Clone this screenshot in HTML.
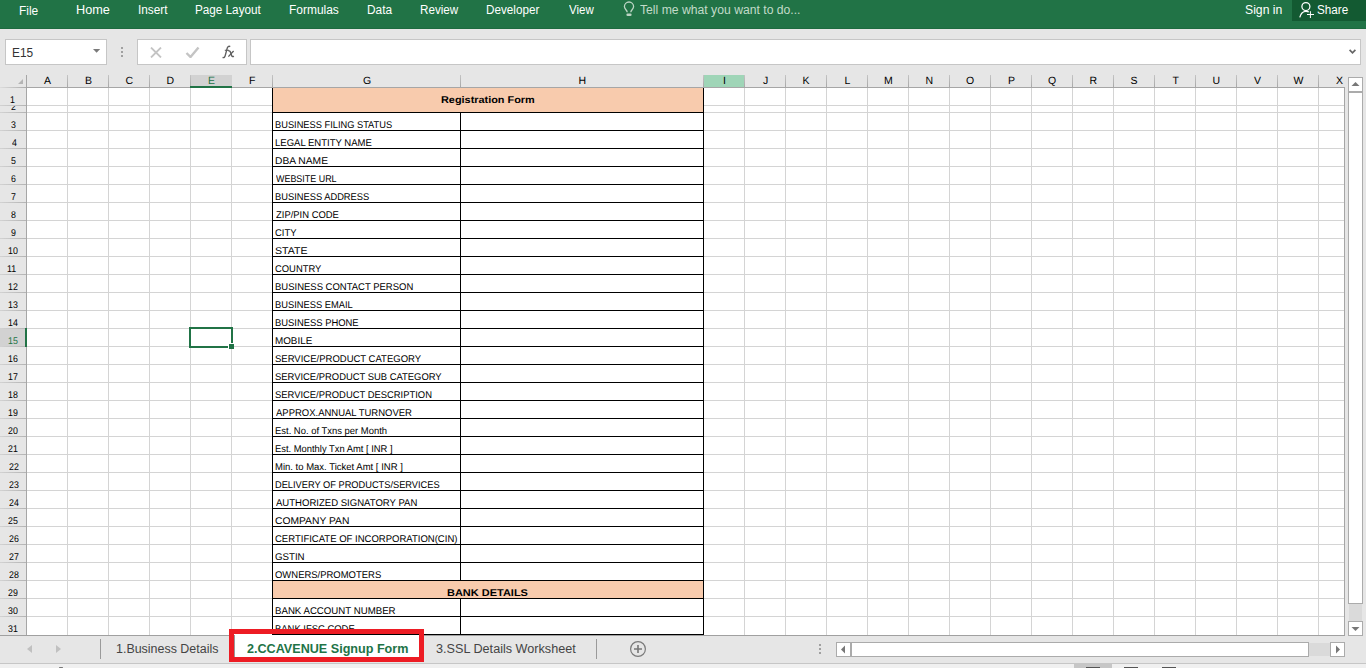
<!DOCTYPE html>
<html><head><meta charset="utf-8"><style>
*{margin:0;padding:0;box-sizing:border-box}
html,body{width:1366px;height:668px;overflow:hidden;background:#e6e6e6;font-family:"Liberation Sans",sans-serif}
.a{position:absolute}
.t{position:absolute;white-space:nowrap;line-height:1}
</style></head><body>

<div class="a" style="left:0;top:0;width:1366px;height:29px;background:#217346"></div>
<div class="a" style="left:0;top:28px;width:1366px;height:1px;background:#1d6a3f"></div>
<div class="a" style="left:1292px;top:0;width:74px;height:21px;background:#135a32"></div>
<div class="t" style="left:19.21px;top:5px;font-size:12px;color:#ffffff;transform:scaleX(0.9944);transform-origin:0 0;">File</div>
<div class="t" style="left:75.82px;top:3px;font-size:13px;color:#ffffff;transform:scaleX(0.9758);transform-origin:0 0;">Home</div>
<div class="t" style="left:137.52px;top:4px;font-size:12px;color:#ffffff;transform:scaleX(0.9828);transform-origin:0 0;">Insert</div>
<div class="t" style="left:195.22px;top:4px;font-size:12px;color:#ffffff;transform:scaleX(0.9758);transform-origin:0 0;">Page Layout</div>
<div class="t" style="left:289.20px;top:4px;font-size:12px;color:#ffffff;transform:scaleX(0.9959);transform-origin:0 0;">Formulas</div>
<div class="t" style="left:367.21px;top:4px;font-size:12px;color:#ffffff;transform:scaleX(0.9875);transform-origin:0 0;">Data</div>
<div class="t" style="left:419.93px;top:4px;font-size:12px;color:#ffffff;transform:scaleX(0.9711);transform-origin:0 0;">Review</div>
<div class="t" style="left:486.33px;top:4px;font-size:12px;color:#ffffff;transform:scaleX(0.9741);transform-origin:0 0;">Developer</div>
<div class="t" style="left:568.80px;top:4px;font-size:12px;color:#ffffff;transform:scaleX(0.9577);transform-origin:0 0;">View</div>
<div class="t" style="left:1244.88px;top:4px;font-size:12px;color:#ffffff;transform:scaleX(1.0171);transform-origin:0 0;">Sign in</div>
<div class="t" style="left:1316.83px;top:4px;font-size:12px;color:#ffffff;transform:scaleX(0.9733);transform-origin:0 0;">Share</div>
<div class="t" style="left:640.40px;top:4px;font-size:12px;color:#c2dbc9;transform:scaleX(1.0153);transform-origin:0 0;">Tell me what you want to do...</div>
<svg class="a" style="left:622px;top:0px" width="14" height="18" viewBox="0 0 14 18"><path d="M5.2 12.2 C5.2 10.2 2.4 9.2 2.4 6.6 A4.6 4.6 0 0 1 11.6 6.6 C11.6 9.2 8.8 10.2 8.8 12.2" fill="none" stroke="#bcd5c4" stroke-width="1.3"/><line x1="5.6" y1="14.8" x2="8.4" y2="14.8" stroke="#bcd5c4" stroke-width="2.4" stroke-linecap="round"/></svg>
<svg class="a" style="left:1298px;top:0px" width="18" height="20" viewBox="0 0 18 20"><circle cx="7.9" cy="6.6" r="4" fill="none" stroke="#fff" stroke-width="1.25"/><path d="M1.8 17.4 C2.6 13.6 5 11.3 8 11.3 C9 11.3 10 11.5 10.8 11.9" fill="none" stroke="#fff" stroke-width="1.25"/><line x1="9" y1="14.5" x2="16" y2="14.5" stroke="#fff" stroke-width="1"/><line x1="12.4" y1="11.2" x2="12.4" y2="18" stroke="#fff" stroke-width="1"/></svg>
<div class="a" style="left:5px;top:39px;width:102px;height:26px;background:#fff;border:1px solid #c6c6c6"></div>
<div class="t" style="left:11.71px;top:47px;font-size:12px;color:#333333;transform:scaleX(0.9900);transform-origin:0 0;">E15</div>
<svg class="a" style="left:92px;top:48px" width="10" height="6" viewBox="0 0 10 6"><path d="M1 1 L8.2 1 L4.6 4.7 Z" fill="#7a7a7a"/></svg>
<div class="a" style="left:121px;top:47px;width:2px;height:2px;background:#a0a0a0"></div>
<div class="a" style="left:121px;top:51px;width:2px;height:2px;background:#a0a0a0"></div>
<div class="a" style="left:121px;top:55px;width:2px;height:2px;background:#a0a0a0"></div>
<div class="a" style="left:137px;top:39px;width:110px;height:26px;background:#fff;border:1px solid #c6c6c6"></div>
<svg class="a" style="left:150px;top:47px" width="12" height="11" viewBox="0 0 12 11"><path d="M1 0.5 L11 10.5 M11 0.5 L1 10.5" stroke="#c4c4c4" stroke-width="1.8"/></svg>
<svg class="a" style="left:185px;top:46px" width="15" height="12" viewBox="0 0 15 12"><path d="M1.5 7 L5.5 11 L13.5 1.5" fill="none" stroke="#c4c4c4" stroke-width="2.4"/></svg>
<svg class="a" style="left:220px;top:44px" width="16" height="16" viewBox="0 0 16 16"><path d="M10.2 2.6 C9.3 1.9 7.9 2.1 7.3 3.9 L5.2 11.6 C4.8 13.2 3.9 14 2.6 13.4" fill="none" stroke="#5e5e5e" stroke-width="1.4"/><path d="M4.8 6.3 L9 6.3" stroke="#5e5e5e" stroke-width="1.1"/><path d="M8.4 7.2 C9.4 6.6 10.1 7 10.5 8.2 L11.6 11.4 C12 12.6 12.9 12.8 13.8 12.1" fill="none" stroke="#5e5e5e" stroke-width="1.4"/><path d="M13.6 7 L8.4 12.6" stroke="#5e5e5e" stroke-width="1.3"/></svg>
<div class="a" style="left:250px;top:39px;width:1111px;height:26px;background:#fff;border:1px solid #c6c6c6"></div>
<svg class="a" style="left:1348px;top:48px" width="10" height="7" viewBox="0 0 10 7"><path d="M1.6 1.9 L4.5 4.8 L7.4 1.9" fill="none" stroke="#666" stroke-width="1.7"/></svg>
<svg class="a" style="left:17px;top:78px" width="7" height="7"><path d="M1 6 L6 6 L6 1 Z" fill="#b4b4b4"/></svg>
<div class="a" style="left:26px;top:75px;width:1px;height:12px;background:linear-gradient(#c4c4c4,#a8a8a8)"></div>
<div class="a" style="left:67px;top:75px;width:1px;height:12px;background:linear-gradient(#c4c4c4,#a8a8a8)"></div>
<div class="a" style="left:108px;top:75px;width:1px;height:12px;background:linear-gradient(#c4c4c4,#a8a8a8)"></div>
<div class="a" style="left:149px;top:75px;width:1px;height:12px;background:linear-gradient(#c4c4c4,#a8a8a8)"></div>
<div class="a" style="left:190px;top:75px;width:1px;height:12px;background:linear-gradient(#c4c4c4,#a8a8a8)"></div>
<div class="a" style="left:231px;top:75px;width:1px;height:12px;background:linear-gradient(#c4c4c4,#a8a8a8)"></div>
<div class="a" style="left:272px;top:75px;width:1px;height:12px;background:linear-gradient(#c4c4c4,#a8a8a8)"></div>
<div class="a" style="left:460px;top:75px;width:1px;height:12px;background:linear-gradient(#c4c4c4,#a8a8a8)"></div>
<div class="a" style="left:703px;top:75px;width:1px;height:12px;background:linear-gradient(#c4c4c4,#a8a8a8)"></div>
<div class="a" style="left:744px;top:75px;width:1px;height:12px;background:linear-gradient(#c4c4c4,#a8a8a8)"></div>
<div class="a" style="left:785px;top:75px;width:1px;height:12px;background:linear-gradient(#c4c4c4,#a8a8a8)"></div>
<div class="a" style="left:826px;top:75px;width:1px;height:12px;background:linear-gradient(#c4c4c4,#a8a8a8)"></div>
<div class="a" style="left:867px;top:75px;width:1px;height:12px;background:linear-gradient(#c4c4c4,#a8a8a8)"></div>
<div class="a" style="left:908px;top:75px;width:1px;height:12px;background:linear-gradient(#c4c4c4,#a8a8a8)"></div>
<div class="a" style="left:949px;top:75px;width:1px;height:12px;background:linear-gradient(#c4c4c4,#a8a8a8)"></div>
<div class="a" style="left:990px;top:75px;width:1px;height:12px;background:linear-gradient(#c4c4c4,#a8a8a8)"></div>
<div class="a" style="left:1031px;top:75px;width:1px;height:12px;background:linear-gradient(#c4c4c4,#a8a8a8)"></div>
<div class="a" style="left:1072px;top:75px;width:1px;height:12px;background:linear-gradient(#c4c4c4,#a8a8a8)"></div>
<div class="a" style="left:1113px;top:75px;width:1px;height:12px;background:linear-gradient(#c4c4c4,#a8a8a8)"></div>
<div class="a" style="left:1154px;top:75px;width:1px;height:12px;background:linear-gradient(#c4c4c4,#a8a8a8)"></div>
<div class="a" style="left:1195px;top:75px;width:1px;height:12px;background:linear-gradient(#c4c4c4,#a8a8a8)"></div>
<div class="a" style="left:1236px;top:75px;width:1px;height:12px;background:linear-gradient(#c4c4c4,#a8a8a8)"></div>
<div class="a" style="left:1277px;top:75px;width:1px;height:12px;background:linear-gradient(#c4c4c4,#a8a8a8)"></div>
<div class="a" style="left:1318px;top:75px;width:1px;height:12px;background:linear-gradient(#c4c4c4,#a8a8a8)"></div>
<div class="a" style="left:0;top:87px;width:26px;height:1px;background:linear-gradient(to right,#dcdcdc,#ababab)"></div>
<div class="a" style="left:26px;top:87px;width:1318px;height:1px;background:#a6a6a6"></div>
<div class="a" style="left:26px;top:75px;width:1px;height:561px;background:#a6a6a6"></div>
<div class="a" style="left:191px;top:75px;width:41px;height:11px;background:#d2d2d2"></div>
<div class="a" style="left:190px;top:86px;width:42px;height:2px;background:#217346"></div>
<div class="a" style="left:704px;top:75px;width:40px;height:12px;background:#9fd5b7"></div>
<div class="t" style="left:44.00px;top:76px;font-size:10.5px;color:#000;text-rendering:geometricPrecision;">A</div>
<div class="t" style="left:85.00px;top:76px;font-size:10.5px;color:#000;text-rendering:geometricPrecision;">B</div>
<div class="t" style="left:125.50px;top:76px;font-size:10.5px;color:#000;text-rendering:geometricPrecision;">C</div>
<div class="t" style="left:166.50px;top:76px;font-size:10.5px;color:#000;text-rendering:geometricPrecision;">D</div>
<div class="t" style="left:208.00px;top:76px;font-size:10.5px;color:#217346;text-rendering:geometricPrecision;">E</div>
<div class="t" style="left:249.00px;top:76px;font-size:10.5px;color:#000;text-rendering:geometricPrecision;">F</div>
<div class="t" style="left:363.00px;top:76px;font-size:10.5px;color:#000;text-rendering:geometricPrecision;">G</div>
<div class="t" style="left:578.50px;top:76px;font-size:10.5px;color:#000;text-rendering:geometricPrecision;">H</div>
<div class="t" style="left:723.00px;top:76px;font-size:10.5px;color:#000;text-rendering:geometricPrecision;">I</div>
<div class="t" style="left:763.00px;top:76px;font-size:10.5px;color:#000;text-rendering:geometricPrecision;">J</div>
<div class="t" style="left:802.50px;top:76px;font-size:10.5px;color:#000;text-rendering:geometricPrecision;">K</div>
<div class="t" style="left:844.50px;top:76px;font-size:10.5px;color:#000;text-rendering:geometricPrecision;">L</div>
<div class="t" style="left:884.00px;top:76px;font-size:10.5px;color:#000;text-rendering:geometricPrecision;">M</div>
<div class="t" style="left:925.50px;top:76px;font-size:10.5px;color:#000;text-rendering:geometricPrecision;">N</div>
<div class="t" style="left:966.00px;top:76px;font-size:10.5px;color:#000;text-rendering:geometricPrecision;">O</div>
<div class="t" style="left:1008.00px;top:76px;font-size:10.5px;color:#000;text-rendering:geometricPrecision;">P</div>
<div class="t" style="left:1048.00px;top:76px;font-size:10.5px;color:#000;text-rendering:geometricPrecision;">Q</div>
<div class="t" style="left:1089.50px;top:76px;font-size:10.5px;color:#000;text-rendering:geometricPrecision;">R</div>
<div class="t" style="left:1130.50px;top:76px;font-size:10.5px;color:#000;text-rendering:geometricPrecision;">S</div>
<div class="t" style="left:1172.50px;top:76px;font-size:10.5px;color:#000;text-rendering:geometricPrecision;">T</div>
<div class="t" style="left:1212.50px;top:76px;font-size:10.5px;color:#000;text-rendering:geometricPrecision;">U</div>
<div class="t" style="left:1254.00px;top:76px;font-size:10.5px;color:#000;text-rendering:geometricPrecision;">V</div>
<div class="t" style="left:1293.50px;top:76px;font-size:10.5px;color:#000;text-rendering:geometricPrecision;">W</div>
<div class="t" style="left:1336.00px;top:76px;font-size:10.5px;color:#000;text-rendering:geometricPrecision;">X</div>
<div class="a" style="left:0;top:329px;width:25px;height:17px;background:#d2d2d2"></div>
<div class="a" style="left:0;top:105px;width:26px;height:1px;background:linear-gradient(to right,#d2d2d2,#b4b4b4)"></div>
<div class="a" style="left:0;top:88px;width:26px;height:18px;overflow:hidden">
<div class="t" style="left:10.20px;top:8px;font-size:9.8px;color:#000;transform:scaleX(0.9000);transform-origin:0 0;text-rendering:geometricPrecision;">1</div>
</div>
<div class="a" style="left:0;top:112px;width:26px;height:1px;background:linear-gradient(to right,#d2d2d2,#b4b4b4)"></div>
<div class="a" style="left:0;top:106px;width:26px;height:7px;overflow:hidden">
<div class="t" style="left:11.10px;top:-3px;font-size:9.8px;color:#000;transform:scaleX(0.9000);transform-origin:0 0;text-rendering:geometricPrecision;">2</div>
</div>
<div class="a" style="left:0;top:130px;width:26px;height:1px;background:linear-gradient(to right,#d2d2d2,#b4b4b4)"></div>
<div class="a" style="left:0;top:113px;width:26px;height:18px;overflow:hidden">
<div class="t" style="left:11.10px;top:8px;font-size:9.8px;color:#000;transform:scaleX(0.9000);transform-origin:0 0;text-rendering:geometricPrecision;">3</div>
</div>
<div class="a" style="left:0;top:148px;width:26px;height:1px;background:linear-gradient(to right,#d2d2d2,#b4b4b4)"></div>
<div class="a" style="left:0;top:131px;width:26px;height:18px;overflow:hidden">
<div class="t" style="left:11.55px;top:8px;font-size:9.8px;color:#000;transform:scaleX(0.9000);transform-origin:0 0;text-rendering:geometricPrecision;">4</div>
</div>
<div class="a" style="left:0;top:166px;width:26px;height:1px;background:linear-gradient(to right,#d2d2d2,#b4b4b4)"></div>
<div class="a" style="left:0;top:149px;width:26px;height:18px;overflow:hidden">
<div class="t" style="left:11.10px;top:8px;font-size:9.8px;color:#000;transform:scaleX(0.9000);transform-origin:0 0;text-rendering:geometricPrecision;">5</div>
</div>
<div class="a" style="left:0;top:184px;width:26px;height:1px;background:linear-gradient(to right,#d2d2d2,#b4b4b4)"></div>
<div class="a" style="left:0;top:167px;width:26px;height:18px;overflow:hidden">
<div class="t" style="left:11.10px;top:8px;font-size:9.8px;color:#000;transform:scaleX(0.9000);transform-origin:0 0;text-rendering:geometricPrecision;">6</div>
</div>
<div class="a" style="left:0;top:202px;width:26px;height:1px;background:linear-gradient(to right,#d2d2d2,#b4b4b4)"></div>
<div class="a" style="left:0;top:185px;width:26px;height:18px;overflow:hidden">
<div class="t" style="left:11.10px;top:8px;font-size:9.8px;color:#000;transform:scaleX(0.9000);transform-origin:0 0;text-rendering:geometricPrecision;">7</div>
</div>
<div class="a" style="left:0;top:220px;width:26px;height:1px;background:linear-gradient(to right,#d2d2d2,#b4b4b4)"></div>
<div class="a" style="left:0;top:203px;width:26px;height:18px;overflow:hidden">
<div class="t" style="left:11.10px;top:8px;font-size:9.8px;color:#000;transform:scaleX(0.9000);transform-origin:0 0;text-rendering:geometricPrecision;">8</div>
</div>
<div class="a" style="left:0;top:238px;width:26px;height:1px;background:linear-gradient(to right,#d2d2d2,#b4b4b4)"></div>
<div class="a" style="left:0;top:221px;width:26px;height:18px;overflow:hidden">
<div class="t" style="left:11.10px;top:8px;font-size:9.8px;color:#000;transform:scaleX(0.9000);transform-origin:0 0;text-rendering:geometricPrecision;">9</div>
</div>
<div class="a" style="left:0;top:256px;width:26px;height:1px;background:linear-gradient(to right,#d2d2d2,#b4b4b4)"></div>
<div class="a" style="left:0;top:239px;width:26px;height:18px;overflow:hidden">
<div class="t" style="left:7.50px;top:8px;font-size:9.8px;color:#000;transform:scaleX(0.9000);transform-origin:0 0;text-rendering:geometricPrecision;">10</div>
</div>
<div class="a" style="left:0;top:274px;width:26px;height:1px;background:linear-gradient(to right,#d2d2d2,#b4b4b4)"></div>
<div class="a" style="left:0;top:257px;width:26px;height:18px;overflow:hidden">
<div class="t" style="left:7.05px;top:8px;font-size:9.8px;color:#000;transform:scaleX(0.9000);transform-origin:0 0;text-rendering:geometricPrecision;">11</div>
</div>
<div class="a" style="left:0;top:292px;width:26px;height:1px;background:linear-gradient(to right,#d2d2d2,#b4b4b4)"></div>
<div class="a" style="left:0;top:275px;width:26px;height:18px;overflow:hidden">
<div class="t" style="left:7.95px;top:8px;font-size:9.8px;color:#000;transform:scaleX(0.9000);transform-origin:0 0;text-rendering:geometricPrecision;">12</div>
</div>
<div class="a" style="left:0;top:310px;width:26px;height:1px;background:linear-gradient(to right,#d2d2d2,#b4b4b4)"></div>
<div class="a" style="left:0;top:293px;width:26px;height:18px;overflow:hidden">
<div class="t" style="left:7.95px;top:8px;font-size:9.8px;color:#000;transform:scaleX(0.9000);transform-origin:0 0;text-rendering:geometricPrecision;">13</div>
</div>
<div class="a" style="left:0;top:328px;width:26px;height:1px;background:linear-gradient(to right,#d2d2d2,#b4b4b4)"></div>
<div class="a" style="left:0;top:311px;width:26px;height:18px;overflow:hidden">
<div class="t" style="left:7.95px;top:8px;font-size:9.8px;color:#000;transform:scaleX(0.9000);transform-origin:0 0;text-rendering:geometricPrecision;">14</div>
</div>
<div class="a" style="left:0;top:346px;width:26px;height:1px;background:linear-gradient(to right,#d2d2d2,#b4b4b4)"></div>
<div class="a" style="left:0;top:329px;width:26px;height:18px;overflow:hidden">
<div class="t" style="left:7.50px;top:8px;font-size:9.8px;color:#217346;transform:scaleX(0.9000);transform-origin:0 0;text-rendering:geometricPrecision;">15</div>
</div>
<div class="a" style="left:0;top:364px;width:26px;height:1px;background:linear-gradient(to right,#d2d2d2,#b4b4b4)"></div>
<div class="a" style="left:0;top:347px;width:26px;height:18px;overflow:hidden">
<div class="t" style="left:7.95px;top:8px;font-size:9.8px;color:#000;transform:scaleX(0.9000);transform-origin:0 0;text-rendering:geometricPrecision;">16</div>
</div>
<div class="a" style="left:0;top:382px;width:26px;height:1px;background:linear-gradient(to right,#d2d2d2,#b4b4b4)"></div>
<div class="a" style="left:0;top:365px;width:26px;height:18px;overflow:hidden">
<div class="t" style="left:7.95px;top:8px;font-size:9.8px;color:#000;transform:scaleX(0.9000);transform-origin:0 0;text-rendering:geometricPrecision;">17</div>
</div>
<div class="a" style="left:0;top:400px;width:26px;height:1px;background:linear-gradient(to right,#d2d2d2,#b4b4b4)"></div>
<div class="a" style="left:0;top:383px;width:26px;height:18px;overflow:hidden">
<div class="t" style="left:7.95px;top:8px;font-size:9.8px;color:#000;transform:scaleX(0.9000);transform-origin:0 0;text-rendering:geometricPrecision;">18</div>
</div>
<div class="a" style="left:0;top:418px;width:26px;height:1px;background:linear-gradient(to right,#d2d2d2,#b4b4b4)"></div>
<div class="a" style="left:0;top:401px;width:26px;height:18px;overflow:hidden">
<div class="t" style="left:7.50px;top:8px;font-size:9.8px;color:#000;transform:scaleX(0.9000);transform-origin:0 0;text-rendering:geometricPrecision;">19</div>
</div>
<div class="a" style="left:0;top:436px;width:26px;height:1px;background:linear-gradient(to right,#d2d2d2,#b4b4b4)"></div>
<div class="a" style="left:0;top:419px;width:26px;height:18px;overflow:hidden">
<div class="t" style="left:8.40px;top:8px;font-size:9.8px;color:#000;transform:scaleX(0.9000);transform-origin:0 0;text-rendering:geometricPrecision;">20</div>
</div>
<div class="a" style="left:0;top:454px;width:26px;height:1px;background:linear-gradient(to right,#d2d2d2,#b4b4b4)"></div>
<div class="a" style="left:0;top:437px;width:26px;height:18px;overflow:hidden">
<div class="t" style="left:7.95px;top:8px;font-size:9.8px;color:#000;transform:scaleX(0.9000);transform-origin:0 0;text-rendering:geometricPrecision;">21</div>
</div>
<div class="a" style="left:0;top:472px;width:26px;height:1px;background:linear-gradient(to right,#d2d2d2,#b4b4b4)"></div>
<div class="a" style="left:0;top:455px;width:26px;height:18px;overflow:hidden">
<div class="t" style="left:8.85px;top:8px;font-size:9.8px;color:#000;transform:scaleX(0.9000);transform-origin:0 0;text-rendering:geometricPrecision;">22</div>
</div>
<div class="a" style="left:0;top:490px;width:26px;height:1px;background:linear-gradient(to right,#d2d2d2,#b4b4b4)"></div>
<div class="a" style="left:0;top:473px;width:26px;height:18px;overflow:hidden">
<div class="t" style="left:8.85px;top:8px;font-size:9.8px;color:#000;transform:scaleX(0.9000);transform-origin:0 0;text-rendering:geometricPrecision;">23</div>
</div>
<div class="a" style="left:0;top:508px;width:26px;height:1px;background:linear-gradient(to right,#d2d2d2,#b4b4b4)"></div>
<div class="a" style="left:0;top:491px;width:26px;height:18px;overflow:hidden">
<div class="t" style="left:8.85px;top:8px;font-size:9.8px;color:#000;transform:scaleX(0.9000);transform-origin:0 0;text-rendering:geometricPrecision;">24</div>
</div>
<div class="a" style="left:0;top:526px;width:26px;height:1px;background:linear-gradient(to right,#d2d2d2,#b4b4b4)"></div>
<div class="a" style="left:0;top:509px;width:26px;height:18px;overflow:hidden">
<div class="t" style="left:8.40px;top:8px;font-size:9.8px;color:#000;transform:scaleX(0.9000);transform-origin:0 0;text-rendering:geometricPrecision;">25</div>
</div>
<div class="a" style="left:0;top:544px;width:26px;height:1px;background:linear-gradient(to right,#d2d2d2,#b4b4b4)"></div>
<div class="a" style="left:0;top:527px;width:26px;height:18px;overflow:hidden">
<div class="t" style="left:8.85px;top:8px;font-size:9.8px;color:#000;transform:scaleX(0.9000);transform-origin:0 0;text-rendering:geometricPrecision;">26</div>
</div>
<div class="a" style="left:0;top:562px;width:26px;height:1px;background:linear-gradient(to right,#d2d2d2,#b4b4b4)"></div>
<div class="a" style="left:0;top:545px;width:26px;height:18px;overflow:hidden">
<div class="t" style="left:8.85px;top:8px;font-size:9.8px;color:#000;transform:scaleX(0.9000);transform-origin:0 0;text-rendering:geometricPrecision;">27</div>
</div>
<div class="a" style="left:0;top:580px;width:26px;height:1px;background:linear-gradient(to right,#d2d2d2,#b4b4b4)"></div>
<div class="a" style="left:0;top:563px;width:26px;height:18px;overflow:hidden">
<div class="t" style="left:8.85px;top:8px;font-size:9.8px;color:#000;transform:scaleX(0.9000);transform-origin:0 0;text-rendering:geometricPrecision;">28</div>
</div>
<div class="a" style="left:0;top:598px;width:26px;height:1px;background:linear-gradient(to right,#d2d2d2,#b4b4b4)"></div>
<div class="a" style="left:0;top:581px;width:26px;height:18px;overflow:hidden">
<div class="t" style="left:8.40px;top:8px;font-size:9.8px;color:#000;transform:scaleX(0.9000);transform-origin:0 0;text-rendering:geometricPrecision;">29</div>
</div>
<div class="a" style="left:0;top:616px;width:26px;height:1px;background:linear-gradient(to right,#d2d2d2,#b4b4b4)"></div>
<div class="a" style="left:0;top:599px;width:26px;height:18px;overflow:hidden">
<div class="t" style="left:8.40px;top:8px;font-size:9.8px;color:#000;transform:scaleX(0.9000);transform-origin:0 0;text-rendering:geometricPrecision;">30</div>
</div>
<div class="a" style="left:0;top:617px;width:26px;height:18px;overflow:hidden">
<div class="t" style="left:7.95px;top:8px;font-size:9.8px;color:#000;transform:scaleX(0.9000);transform-origin:0 0;text-rendering:geometricPrecision;">31</div>
</div>
<div class="a" style="left:25px;top:328px;width:2px;height:19px;background:#217346"></div>
<div class="a" style="left:27px;top:88px;width:1317px;height:547px;background:#fff;overflow:hidden">
<div class="a" style="left:40px;top:0;width:1px;height:547px;background:#d4d4d4"></div>
<div class="a" style="left:81px;top:0;width:1px;height:547px;background:#d4d4d4"></div>
<div class="a" style="left:122px;top:0;width:1px;height:547px;background:#d4d4d4"></div>
<div class="a" style="left:163px;top:0;width:1px;height:547px;background:#d4d4d4"></div>
<div class="a" style="left:204px;top:0;width:1px;height:547px;background:#d4d4d4"></div>
<div class="a" style="left:245px;top:0;width:1px;height:547px;background:#d4d4d4"></div>
<div class="a" style="left:433px;top:0;width:1px;height:547px;background:#d4d4d4"></div>
<div class="a" style="left:676px;top:0;width:1px;height:547px;background:#d4d4d4"></div>
<div class="a" style="left:717px;top:0;width:1px;height:547px;background:#d4d4d4"></div>
<div class="a" style="left:758px;top:0;width:1px;height:547px;background:#d4d4d4"></div>
<div class="a" style="left:799px;top:0;width:1px;height:547px;background:#d4d4d4"></div>
<div class="a" style="left:840px;top:0;width:1px;height:547px;background:#d4d4d4"></div>
<div class="a" style="left:881px;top:0;width:1px;height:547px;background:#d4d4d4"></div>
<div class="a" style="left:922px;top:0;width:1px;height:547px;background:#d4d4d4"></div>
<div class="a" style="left:963px;top:0;width:1px;height:547px;background:#d4d4d4"></div>
<div class="a" style="left:1004px;top:0;width:1px;height:547px;background:#d4d4d4"></div>
<div class="a" style="left:1045px;top:0;width:1px;height:547px;background:#d4d4d4"></div>
<div class="a" style="left:1086px;top:0;width:1px;height:547px;background:#d4d4d4"></div>
<div class="a" style="left:1127px;top:0;width:1px;height:547px;background:#d4d4d4"></div>
<div class="a" style="left:1168px;top:0;width:1px;height:547px;background:#d4d4d4"></div>
<div class="a" style="left:1209px;top:0;width:1px;height:547px;background:#d4d4d4"></div>
<div class="a" style="left:1250px;top:0;width:1px;height:547px;background:#d4d4d4"></div>
<div class="a" style="left:1291px;top:0;width:1px;height:547px;background:#d4d4d4"></div>
<div class="a" style="left:0;top:17px;width:1317px;height:1px;background:#d4d4d4"></div>
<div class="a" style="left:0;top:24px;width:1317px;height:1px;background:#d4d4d4"></div>
<div class="a" style="left:0;top:42px;width:1317px;height:1px;background:#d4d4d4"></div>
<div class="a" style="left:0;top:60px;width:1317px;height:1px;background:#d4d4d4"></div>
<div class="a" style="left:0;top:78px;width:1317px;height:1px;background:#d4d4d4"></div>
<div class="a" style="left:0;top:96px;width:1317px;height:1px;background:#d4d4d4"></div>
<div class="a" style="left:0;top:114px;width:1317px;height:1px;background:#d4d4d4"></div>
<div class="a" style="left:0;top:132px;width:1317px;height:1px;background:#d4d4d4"></div>
<div class="a" style="left:0;top:150px;width:1317px;height:1px;background:#d4d4d4"></div>
<div class="a" style="left:0;top:168px;width:1317px;height:1px;background:#d4d4d4"></div>
<div class="a" style="left:0;top:186px;width:1317px;height:1px;background:#d4d4d4"></div>
<div class="a" style="left:0;top:204px;width:1317px;height:1px;background:#d4d4d4"></div>
<div class="a" style="left:0;top:222px;width:1317px;height:1px;background:#d4d4d4"></div>
<div class="a" style="left:0;top:240px;width:1317px;height:1px;background:#d4d4d4"></div>
<div class="a" style="left:0;top:258px;width:1317px;height:1px;background:#d4d4d4"></div>
<div class="a" style="left:0;top:276px;width:1317px;height:1px;background:#d4d4d4"></div>
<div class="a" style="left:0;top:294px;width:1317px;height:1px;background:#d4d4d4"></div>
<div class="a" style="left:0;top:312px;width:1317px;height:1px;background:#d4d4d4"></div>
<div class="a" style="left:0;top:330px;width:1317px;height:1px;background:#d4d4d4"></div>
<div class="a" style="left:0;top:348px;width:1317px;height:1px;background:#d4d4d4"></div>
<div class="a" style="left:0;top:366px;width:1317px;height:1px;background:#d4d4d4"></div>
<div class="a" style="left:0;top:384px;width:1317px;height:1px;background:#d4d4d4"></div>
<div class="a" style="left:0;top:402px;width:1317px;height:1px;background:#d4d4d4"></div>
<div class="a" style="left:0;top:420px;width:1317px;height:1px;background:#d4d4d4"></div>
<div class="a" style="left:0;top:438px;width:1317px;height:1px;background:#d4d4d4"></div>
<div class="a" style="left:0;top:456px;width:1317px;height:1px;background:#d4d4d4"></div>
<div class="a" style="left:0;top:474px;width:1317px;height:1px;background:#d4d4d4"></div>
<div class="a" style="left:0;top:492px;width:1317px;height:1px;background:#d4d4d4"></div>
<div class="a" style="left:0;top:510px;width:1317px;height:1px;background:#d4d4d4"></div>
<div class="a" style="left:0;top:528px;width:1317px;height:1px;background:#d4d4d4"></div>
</div>
<div class="a" style="left:1344px;top:87px;width:1px;height:549px;background:#a6a6a6"></div>
<div class="a" style="left:0;top:635px;width:1345px;height:1px;background:#a0a0a0"></div>
<div class="a" style="left:273px;top:88px;width:430px;height:24px;background:#f8cbad"></div>
<div class="a" style="left:273px;top:581px;width:430px;height:17px;background:#f8cbad"></div>
<div class="a" style="left:272px;top:112px;width:432px;height:1px;background:#000"></div>
<div class="a" style="left:272px;top:130px;width:432px;height:1px;background:#000"></div>
<div class="a" style="left:272px;top:148px;width:432px;height:1px;background:#000"></div>
<div class="a" style="left:272px;top:166px;width:432px;height:1px;background:#000"></div>
<div class="a" style="left:272px;top:184px;width:432px;height:1px;background:#000"></div>
<div class="a" style="left:272px;top:202px;width:432px;height:1px;background:#000"></div>
<div class="a" style="left:272px;top:220px;width:432px;height:1px;background:#000"></div>
<div class="a" style="left:272px;top:238px;width:432px;height:1px;background:#000"></div>
<div class="a" style="left:272px;top:256px;width:432px;height:1px;background:#000"></div>
<div class="a" style="left:272px;top:274px;width:432px;height:1px;background:#000"></div>
<div class="a" style="left:272px;top:292px;width:432px;height:1px;background:#000"></div>
<div class="a" style="left:272px;top:310px;width:432px;height:1px;background:#000"></div>
<div class="a" style="left:272px;top:328px;width:432px;height:1px;background:#000"></div>
<div class="a" style="left:272px;top:346px;width:432px;height:1px;background:#000"></div>
<div class="a" style="left:272px;top:364px;width:432px;height:1px;background:#000"></div>
<div class="a" style="left:272px;top:382px;width:432px;height:1px;background:#000"></div>
<div class="a" style="left:272px;top:400px;width:432px;height:1px;background:#000"></div>
<div class="a" style="left:272px;top:418px;width:432px;height:1px;background:#000"></div>
<div class="a" style="left:272px;top:436px;width:432px;height:1px;background:#000"></div>
<div class="a" style="left:272px;top:454px;width:432px;height:1px;background:#000"></div>
<div class="a" style="left:272px;top:472px;width:432px;height:1px;background:#000"></div>
<div class="a" style="left:272px;top:490px;width:432px;height:1px;background:#000"></div>
<div class="a" style="left:272px;top:508px;width:432px;height:1px;background:#000"></div>
<div class="a" style="left:272px;top:526px;width:432px;height:1px;background:#000"></div>
<div class="a" style="left:272px;top:544px;width:432px;height:1px;background:#000"></div>
<div class="a" style="left:272px;top:562px;width:432px;height:1px;background:#000"></div>
<div class="a" style="left:272px;top:580px;width:432px;height:1px;background:#000"></div>
<div class="a" style="left:272px;top:598px;width:432px;height:1px;background:#000"></div>
<div class="a" style="left:272px;top:616px;width:432px;height:1px;background:#000"></div>
<div class="a" style="left:272px;top:634px;width:432px;height:1px;background:#000"></div>
<div class="a" style="left:272px;top:88px;width:1px;height:547px;background:#000"></div>
<div class="a" style="left:703px;top:88px;width:1px;height:547px;background:#000"></div>
<div class="a" style="left:460px;top:112px;width:1px;height:18px;background:#000"></div>
<div class="a" style="left:460px;top:130px;width:1px;height:18px;background:#000"></div>
<div class="a" style="left:460px;top:148px;width:1px;height:18px;background:#000"></div>
<div class="a" style="left:460px;top:166px;width:1px;height:18px;background:#000"></div>
<div class="a" style="left:460px;top:184px;width:1px;height:18px;background:#000"></div>
<div class="a" style="left:460px;top:202px;width:1px;height:18px;background:#000"></div>
<div class="a" style="left:460px;top:220px;width:1px;height:18px;background:#000"></div>
<div class="a" style="left:460px;top:238px;width:1px;height:18px;background:#000"></div>
<div class="a" style="left:460px;top:256px;width:1px;height:18px;background:#000"></div>
<div class="a" style="left:460px;top:274px;width:1px;height:18px;background:#000"></div>
<div class="a" style="left:460px;top:292px;width:1px;height:18px;background:#000"></div>
<div class="a" style="left:460px;top:310px;width:1px;height:18px;background:#000"></div>
<div class="a" style="left:460px;top:328px;width:1px;height:18px;background:#000"></div>
<div class="a" style="left:460px;top:346px;width:1px;height:18px;background:#000"></div>
<div class="a" style="left:460px;top:364px;width:1px;height:18px;background:#000"></div>
<div class="a" style="left:460px;top:382px;width:1px;height:18px;background:#000"></div>
<div class="a" style="left:460px;top:400px;width:1px;height:18px;background:#000"></div>
<div class="a" style="left:460px;top:418px;width:1px;height:18px;background:#000"></div>
<div class="a" style="left:460px;top:436px;width:1px;height:18px;background:#000"></div>
<div class="a" style="left:460px;top:454px;width:1px;height:18px;background:#000"></div>
<div class="a" style="left:460px;top:472px;width:1px;height:18px;background:#000"></div>
<div class="a" style="left:460px;top:490px;width:1px;height:18px;background:#000"></div>
<div class="a" style="left:460px;top:508px;width:1px;height:18px;background:#000"></div>
<div class="a" style="left:460px;top:526px;width:1px;height:18px;background:#000"></div>
<div class="a" style="left:460px;top:544px;width:1px;height:18px;background:#000"></div>
<div class="a" style="left:460px;top:562px;width:1px;height:18px;background:#000"></div>
<div class="a" style="left:460px;top:598px;width:1px;height:18px;background:#000"></div>
<div class="a" style="left:460px;top:616px;width:1px;height:18px;background:#000"></div>
<div class="t" style="left:440.79px;top:96px;font-size:9.8px;color:#000;font-weight:bold;transform:scaleX(1.1108);transform-origin:0 0;text-rendering:geometricPrecision;">Registration Form</div>
<div class="t" style="left:447.48px;top:589px;font-size:9.8px;color:#000;font-weight:bold;transform:scaleX(1.1211);transform-origin:0 0;text-rendering:geometricPrecision;">BANK DETAILS</div>
<div class="t" style="left:274.75px;top:121px;font-size:9.8px;color:#000;transform:scaleX(0.9467);transform-origin:0 0;text-rendering:geometricPrecision;">BUSINESS FILING STATUS</div>
<div class="t" style="left:274.73px;top:139px;font-size:9.8px;color:#000;transform:scaleX(0.9724);transform-origin:0 0;text-rendering:geometricPrecision;">LEGAL ENTITY NAME</div>
<div class="t" style="left:274.65px;top:157px;font-size:9.8px;color:#000;transform:scaleX(1.0469);transform-origin:0 0;text-rendering:geometricPrecision;">DBA NAME</div>
<div class="t" style="left:275.70px;top:175px;font-size:9.8px;color:#000;transform:scaleX(0.9121);transform-origin:0 0;text-rendering:geometricPrecision;">WEBSITE URL</div>
<div class="t" style="left:274.75px;top:193px;font-size:9.8px;color:#000;transform:scaleX(0.9510);transform-origin:0 0;text-rendering:geometricPrecision;">BUSINESS ADDRESS</div>
<div class="t" style="left:275.70px;top:211px;font-size:9.8px;color:#000;transform:scaleX(0.9631);transform-origin:0 0;text-rendering:geometricPrecision;">ZIP/PIN CODE</div>
<div class="t" style="left:274.74px;top:229px;font-size:9.8px;color:#000;transform:scaleX(0.9619);transform-origin:0 0;text-rendering:geometricPrecision;">CITY</div>
<div class="t" style="left:274.62px;top:247px;font-size:9.8px;color:#000;transform:scaleX(1.0786);transform-origin:0 0;text-rendering:geometricPrecision;">STATE</div>
<div class="t" style="left:274.74px;top:265px;font-size:9.8px;color:#000;transform:scaleX(0.9596);transform-origin:0 0;text-rendering:geometricPrecision;">COUNTRY</div>
<div class="t" style="left:274.73px;top:283px;font-size:9.8px;color:#000;transform:scaleX(0.9681);transform-origin:0 0;text-rendering:geometricPrecision;">BUSINESS CONTACT PERSON</div>
<div class="t" style="left:274.75px;top:301px;font-size:9.8px;color:#000;transform:scaleX(0.9525);transform-origin:0 0;text-rendering:geometricPrecision;">BUSINESS EMAIL</div>
<div class="t" style="left:274.74px;top:319px;font-size:9.8px;color:#000;transform:scaleX(0.9600);transform-origin:0 0;text-rendering:geometricPrecision;">BUSINESS PHONE</div>
<div class="t" style="left:274.69px;top:337px;font-size:9.8px;color:#000;transform:scaleX(1.0057);transform-origin:0 0;text-rendering:geometricPrecision;">MOBILE</div>
<div class="t" style="left:274.73px;top:355px;font-size:9.8px;color:#000;transform:scaleX(0.9698);transform-origin:0 0;text-rendering:geometricPrecision;">SERVICE/PRODUCT CATEGORY</div>
<div class="t" style="left:274.74px;top:373px;font-size:9.8px;color:#000;transform:scaleX(0.9605);transform-origin:0 0;text-rendering:geometricPrecision;">SERVICE/PRODUCT SUB CATEGORY</div>
<div class="t" style="left:274.74px;top:391px;font-size:9.8px;color:#000;transform:scaleX(0.9599);transform-origin:0 0;text-rendering:geometricPrecision;">SERVICE/PRODUCT DESCRIPTION</div>
<div class="t" style="left:275.70px;top:409px;font-size:9.8px;color:#000;transform:scaleX(0.9679);transform-origin:0 0;text-rendering:geometricPrecision;">APPROX.ANNUAL TURNOVER</div>
<div class="t" style="left:274.74px;top:427px;font-size:9.8px;color:#000;transform:scaleX(0.9626);transform-origin:0 0;text-rendering:geometricPrecision;">Est. No. of Txns per Month</div>
<div class="t" style="left:274.74px;top:445px;font-size:9.8px;color:#000;transform:scaleX(0.9570);transform-origin:0 0;text-rendering:geometricPrecision;">Est. Monthly Txn Amt [ INR ]</div>
<div class="t" style="left:274.73px;top:463px;font-size:9.8px;color:#000;transform:scaleX(0.9700);transform-origin:0 0;text-rendering:geometricPrecision;">Min. to Max. Ticket Amt [ INR ]</div>
<div class="t" style="left:274.75px;top:481px;font-size:9.8px;color:#000;transform:scaleX(0.9451);transform-origin:0 0;text-rendering:geometricPrecision;">DELIVERY OF PRODUCTS/SERVICES</div>
<div class="t" style="left:275.70px;top:499px;font-size:9.8px;color:#000;transform:scaleX(0.9750);transform-origin:0 0;text-rendering:geometricPrecision;">AUTHORIZED SIGNATORY PAN</div>
<div class="t" style="left:274.65px;top:517px;font-size:9.8px;color:#000;transform:scaleX(1.0507);transform-origin:0 0;text-rendering:geometricPrecision;">COMPANY PAN</div>
<div class="t" style="left:274.73px;top:535px;font-size:9.8px;color:#000;transform:scaleX(0.9715);transform-origin:0 0;text-rendering:geometricPrecision;">CERTIFICATE OF INCORPORATION(CIN)</div>
<div class="t" style="left:274.71px;top:553px;font-size:9.8px;color:#000;transform:scaleX(0.9893);transform-origin:0 0;text-rendering:geometricPrecision;">GSTIN</div>
<div class="t" style="left:274.73px;top:571px;font-size:9.8px;color:#000;transform:scaleX(0.9661);transform-origin:0 0;text-rendering:geometricPrecision;">OWNERS/PROMOTERS</div>
<div class="t" style="left:274.71px;top:607px;font-size:9.8px;color:#000;transform:scaleX(0.9860);transform-origin:0 0;text-rendering:geometricPrecision;">BANK ACCOUNT NUMBER</div>
<div class="t" style="left:274.74px;top:625px;font-size:9.8px;color:#000;transform:scaleX(0.9630);transform-origin:0 0;text-rendering:geometricPrecision;">BANK IFSC CODE</div>
<div class="a" style="left:189px;top:327px;width:44px;height:21px;border:2px solid #217346"></div>
<div class="a" style="left:228px;top:343px;width:6px;height:6px;background:#fff"></div>
<div class="a" style="left:229px;top:344px;width:5px;height:5px;background:#217346"></div>
<div class="a" style="left:1348px;top:77px;width:15px;height:15px;background:#fff;border:1px solid #ababab"></div>
<svg class="a" style="left:1351px;top:81px" width="9" height="6"><path d="M0.5 5 L8.5 5 L4.5 1 Z" fill="#777"/></svg>
<div class="a" style="left:1348px;top:91px;width:15px;height:513px;background:#fff;border:1px solid #ababab;border-top-width:2px"></div>
<div class="a" style="left:1349px;top:604px;width:13px;height:17px;background:#dadada"></div>
<div class="a" style="left:1348px;top:621px;width:15px;height:15px;background:#fff;border:1px solid #ababab"></div>
<svg class="a" style="left:1351px;top:626px" width="9" height="6"><path d="M0.5 1 L8.5 1 L4.5 5 Z" fill="#777"/></svg>
<svg class="a" style="left:25px;top:644px" width="9" height="10"><path d="M7 1 L2 5 L7 9 Z" fill="#c0c0c0"/></svg>
<svg class="a" style="left:54px;top:644px" width="9" height="10"><path d="M2 1 L7 5 L2 9 Z" fill="#c0c0c0"/></svg>
<div class="a" style="left:100px;top:639px;width:1px;height:20px;background:#9a9a9a"></div>
<div class="a" style="left:234px;top:635px;width:186px;height:22px;background:#fff;border-left:1px solid #9a9a9a"></div>
<div class="t" style="left:116.00px;top:643px;font-size:12.5px;color:#444444;transform:scaleX(0.9960);transform-origin:0 0;">1.Business Details</div>
<div class="t" style="left:247.40px;top:643px;font-size:12.5px;color:#217346;font-weight:bold;transform:scaleX(1.0075);transform-origin:0 0;">2.CCAVENUE Signup Form</div>
<div class="t" style="left:436.49px;top:643px;font-size:12.5px;color:#444444;transform:scaleX(1.0109);transform-origin:0 0;">3.SSL Details Worksheet</div>
<div class="a" style="left:596px;top:639px;width:1px;height:20px;background:#9a9a9a"></div>
<svg class="a" style="left:629px;top:640px" width="18" height="18"><circle cx="9" cy="9" r="7.4" fill="none" stroke="#7a7a7a" stroke-width="1.2"/><path d="M9 5 L9 13 M5 9 L13 9" stroke="#777" stroke-width="1.6"/></svg>
<div class="a" style="left:229px;top:629px;width:195px;height:33px;border:5px solid #ed1c24"></div>
<div class="a" style="left:819px;top:644px;width:2px;height:2px;background:#a0a0a0"></div>
<div class="a" style="left:819px;top:648px;width:2px;height:2px;background:#a0a0a0"></div>
<div class="a" style="left:819px;top:652px;width:2px;height:2px;background:#a0a0a0"></div>
<div class="a" style="left:836px;top:642px;width:15px;height:15px;background:#fff;border:1px solid #ababab"></div>
<svg class="a" style="left:840px;top:645px" width="6" height="9"><path d="M5 0.5 L5 8.5 L1 4.5 Z" fill="#777"/></svg>
<div class="a" style="left:850px;top:642px;width:459px;height:15px;background:#fff;border:1px solid #ababab;border-left-width:2px"></div>
<div class="a" style="left:1309px;top:643px;width:21px;height:13px;background:#dadada"></div>
<div class="a" style="left:1330px;top:642px;width:15px;height:15px;background:#fff;border:1px solid #ababab"></div>
<svg class="a" style="left:1335px;top:645px" width="6" height="9"><path d="M1 0.5 L1 8.5 L5 4.5 Z" fill="#777"/></svg>
<div class="a" style="left:0;top:663px;width:1366px;height:1px;background:#c6c6c6"></div>
<div class="a" style="left:0;top:664px;width:1366px;height:4px;background:#f0f0f0"></div>
<div class="a" style="left:1074px;top:664px;width:38px;height:4px;background:#c6c6c6"></div>
<div class="a" style="left:59px;top:667px;width:4px;height:1px;background:#777;border-radius:1px"></div>
<div class="a" style="left:1086px;top:667px;width:14px;height:1px;background:#555"></div>
<div class="a" style="left:1124px;top:667px;width:14px;height:1px;background:#555"></div>
<div class="a" style="left:1162px;top:667px;width:14px;height:1px;background:#555"></div>
</body></html>
